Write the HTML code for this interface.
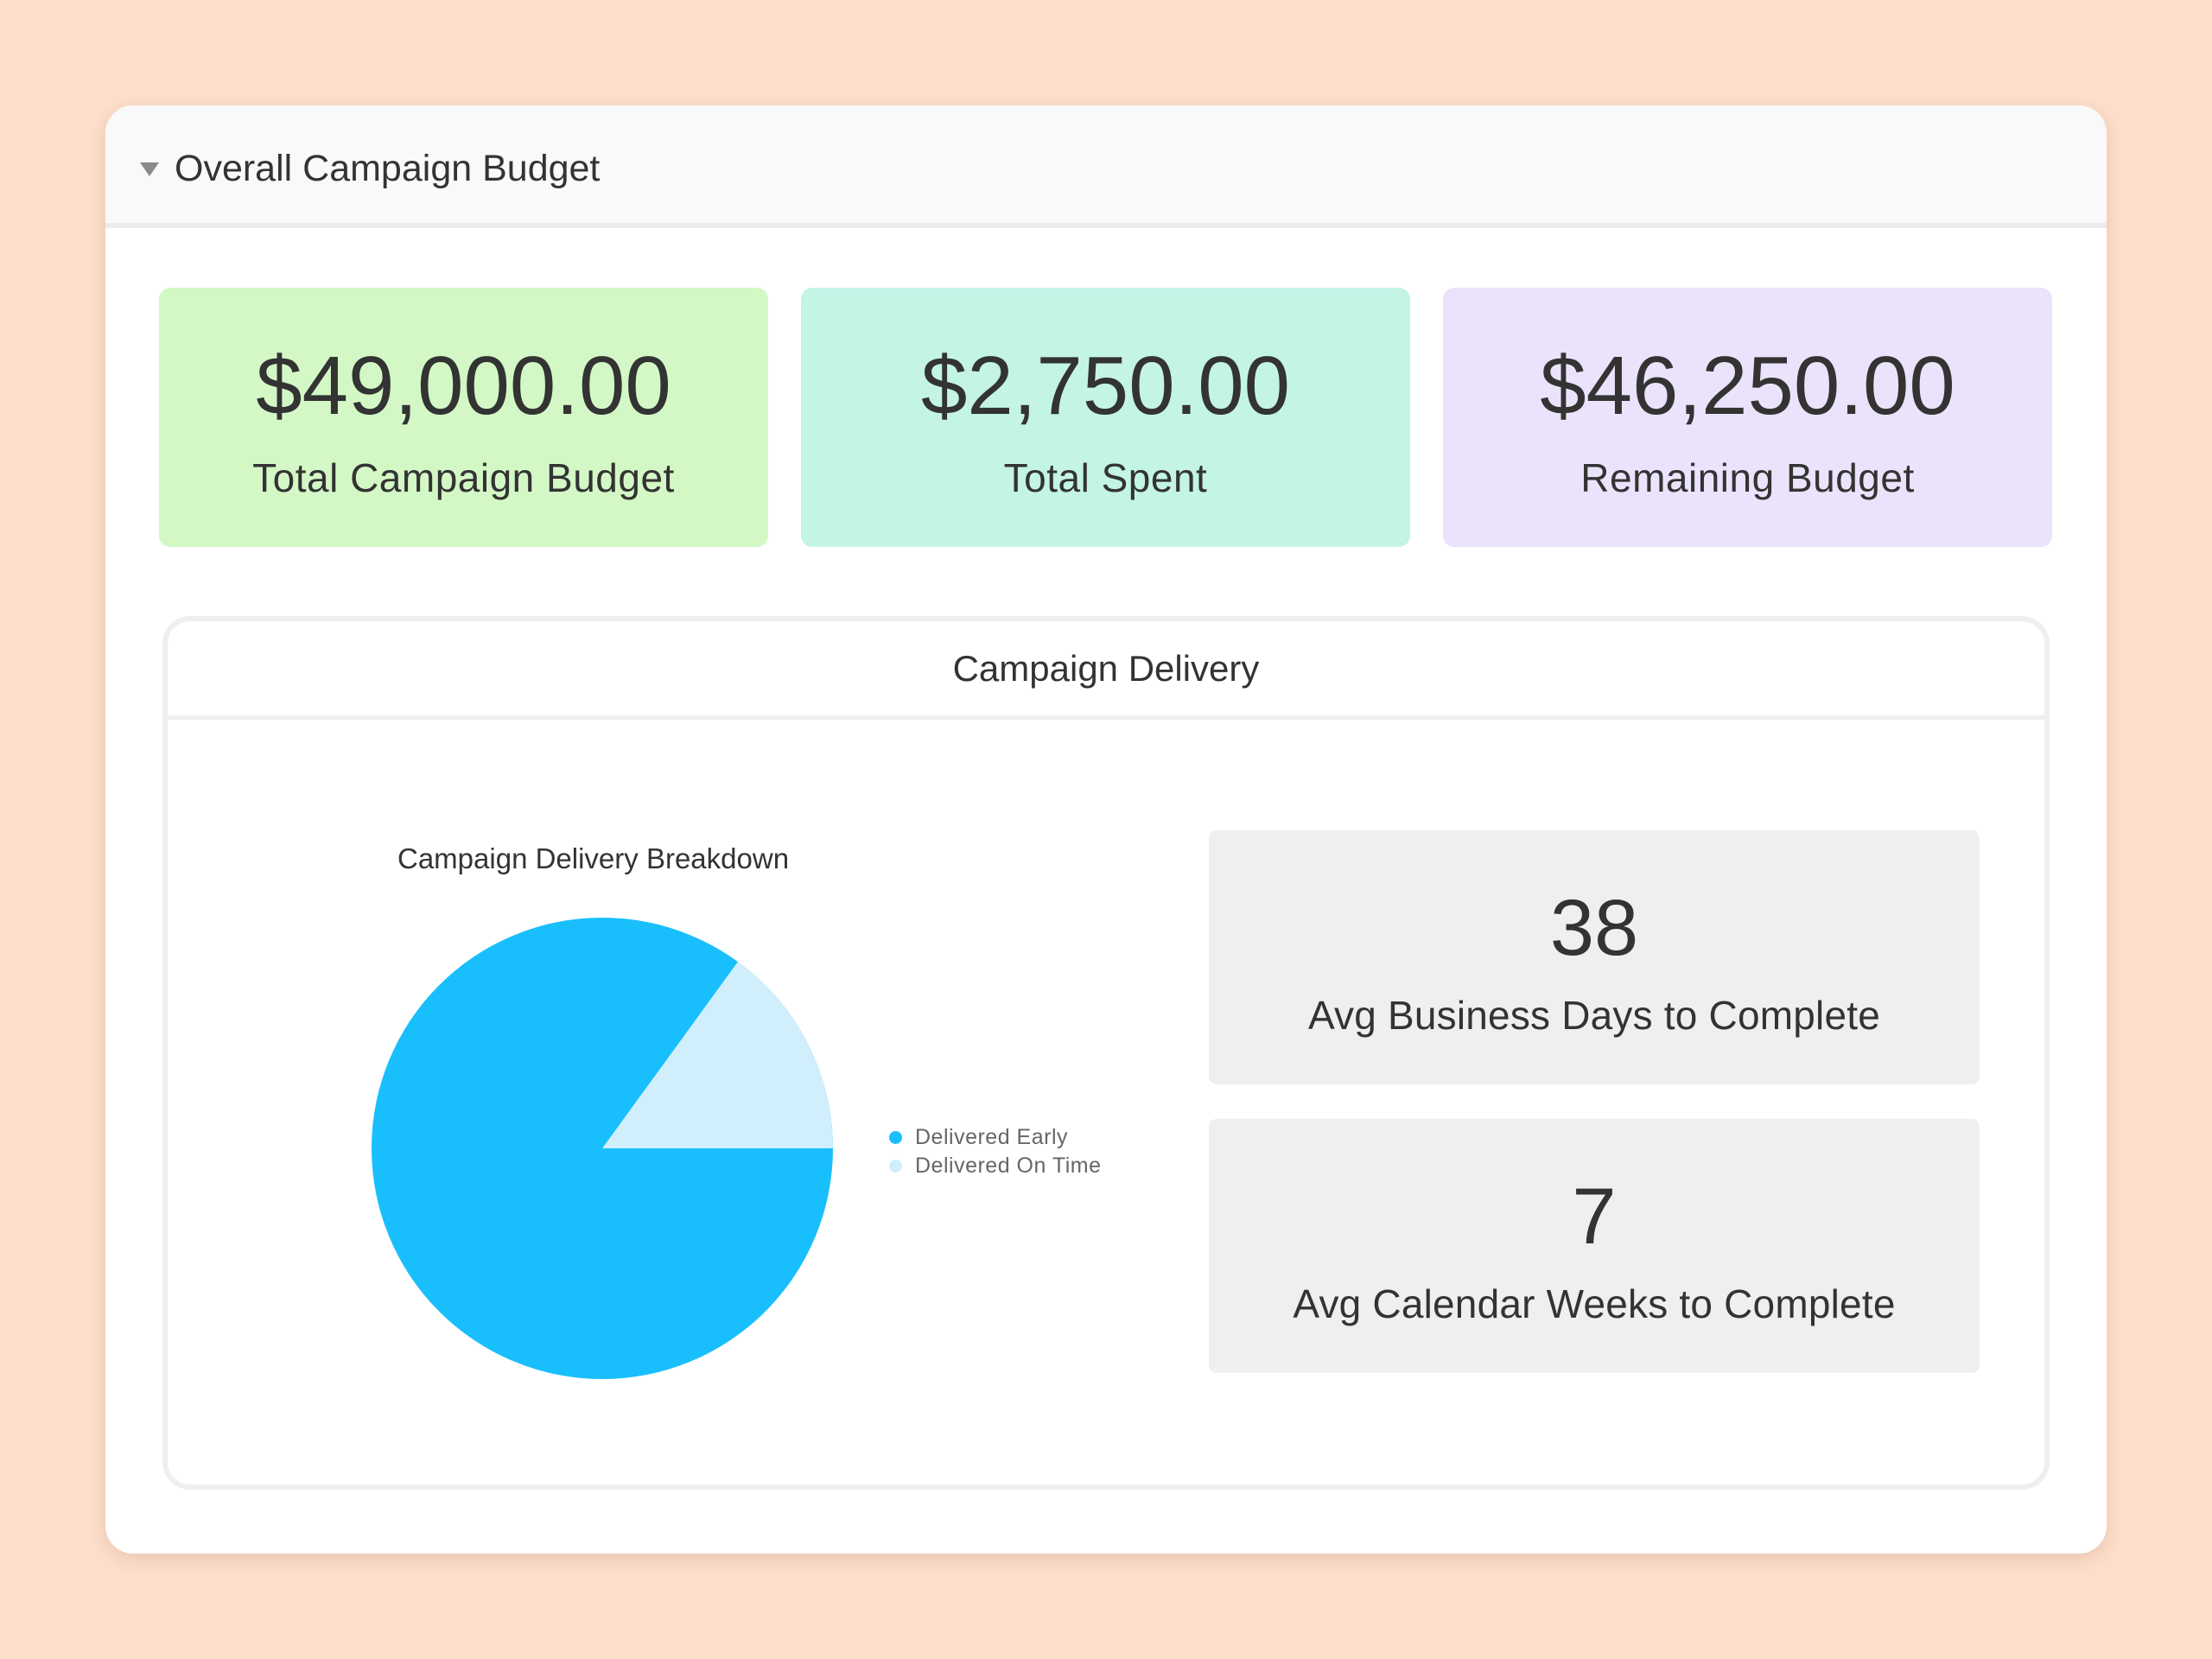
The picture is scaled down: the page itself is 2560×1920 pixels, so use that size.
<!DOCTYPE html>
<html><head><meta charset="utf-8"><style>
*{margin:0;padding:0;box-sizing:border-box}
body{width:2560px;height:1920px;background:#fddfcb;font-family:"Liberation Sans",sans-serif;color:#333;position:relative;overflow:hidden}
.card{position:absolute;left:122px;top:122px;width:2316px;height:1676px;background:#fff;border-radius:32px;box-shadow:0 6px 20px rgba(180,120,90,.25);overflow:hidden}
.hdr{position:absolute;left:0;top:0;width:100%;height:142px;background:#f9f9f9;border-bottom:6px solid #ececec}
.tri{position:absolute;left:40px;top:66px;width:0;height:0;border-left:11px solid transparent;border-right:11px solid transparent;border-top:16px solid #8a8a8a}
.htxt{position:absolute;left:80px;top:47px;font-size:43px;line-height:52px;color:#333}
.stat{position:absolute;top:211px;width:705px;height:300px;border-radius:13px;text-align:center}
.v{position:absolute;left:0;right:0;top:59px;font-size:96px;line-height:110px}
.l{position:absolute;left:0;right:0;top:192px;font-size:46px;line-height:56px;letter-spacing:.5px}
.panel{position:absolute;left:66px;top:591px;width:2184px;height:1011px;border:6px solid #efefef;border-radius:32px}
.ptitle{position:absolute;left:0;right:0;top:29px;text-align:center;font-size:42px;line-height:52px}
.pdiv{position:absolute;left:0;right:0;top:109px;height:5px;background:#efefef}
.ctitle{position:absolute;left:266px;top:255px;font-size:33px;line-height:40px}
.leg{position:absolute;left:865px;font-size:25px;color:#666;line-height:30px;letter-spacing:.5px}
.dot{position:absolute;left:-30px;top:8px;width:15px;height:15px;border-radius:50%}
.box{position:absolute;left:1205px;width:892px;height:294px;background:#efefef;border-radius:9px;text-align:center}
.bn{position:absolute;left:0;right:0;top:60px;font-size:92px;line-height:106px}
.bl{position:absolute;left:0;right:0;top:186px;font-size:46px;line-height:56px;letter-spacing:.2px}
</style></head><body>
<div class="card">
 <div class="hdr"><div class="tri"></div><div class="htxt">Overall Campaign Budget</div></div>
 <div class="stat" style="left:62px;background:#d3f8c6"><div class="v">$49,000.00</div><div class="l">Total Campaign Budget</div></div>
 <div class="stat" style="left:805px;background:#c3f4e6"><div class="v">$2,750.00</div><div class="l">Total Spent</div></div>
 <div class="stat" style="left:1548px;background:#ebe3fb"><div class="v">$46,250.00</div><div class="l">Remaining Budget</div></div>
 <div class="panel">
  <div class="ptitle">Campaign Delivery</div>
  <div class="pdiv"></div>
  <div class="ctitle">Campaign Delivery Breakdown</div>
  <svg style="position:absolute;left:233px;top:340px" width="540" height="540" viewBox="0 0 540 540">
   <circle cx="270" cy="270" r="267" fill="#19bffc"/>
   <path d="M270 270 L537 270 A267 267 0 0 0 427 54 Z" fill="#d0eefb"/>
  </svg>
  <div class="leg" style="top:582px"><span class="dot" style="background:#19bffc"></span>Delivered Early</div>
  <div class="leg" style="top:615px"><span class="dot" style="background:#d0eefb"></span>Delivered On Time</div>
  <div class="box" style="top:242px"><div class="bn">38</div><div class="bl">Avg Business Days to Complete</div></div>
  <div class="box" style="top:576px"><div class="bn">7</div><div class="bl">Avg Calendar Weeks to Complete</div></div>
 </div>
</div>
</body></html>
